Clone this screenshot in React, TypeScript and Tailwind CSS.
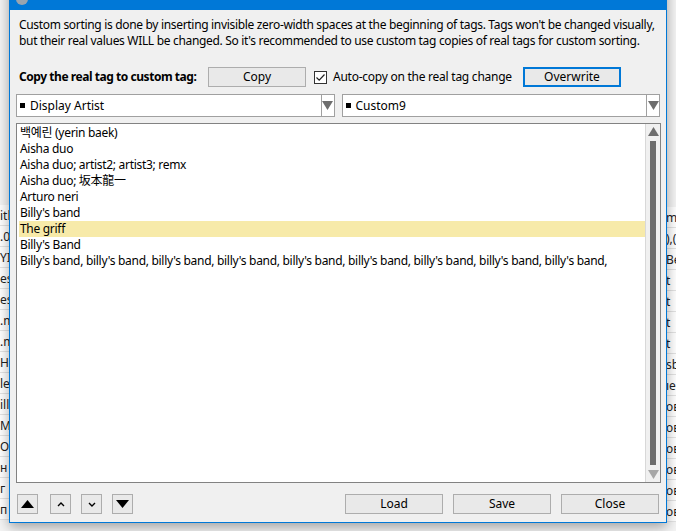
import React from "react";

const items = [
  { text: "백예린 (yerin baek)" },
  { text: "Aisha duo" },
  { text: "Aisha duo; artist2; artist3; remx" },
  { text: "Aisha duo; 坂本龍一" },
  { text: "Arturo neri" },
  { text: "Billy's band" },
  { text: "The griff", selected: true },
  { text: "Billy's Band" },
  {
    text: "Billy's band, billy's band, billy's band, billy's band, billy's band, billy's band, billy's band, billy's band, billy's band,",
  },
];

const leftBg = ["itl", ".0", "YI", "es", "es", ".m", ".m", "H(", "le", "ill", "My", "Ото", "н", "г", "п"];
const rightBg = ["m", "),(", "Be", "t", "t", "t", "t", "sb", "ıe", "ов", "ов", "ов", "ов", "ов", "ов"];

function WinButton({ label, focused, className }: { label: string; focused?: boolean; className?: string }) {
  return (
    <button
      type="button"
      className={[
        "flex h-[20px] w-[98px] shrink-0 items-center justify-center bg-[#e9e9e9] text-[12px] leading-none text-black",
        focused ? "border-2 border-[#0078d7]" : "border border-[#adadad]",
        className ?? "",
      ].join(" ")}
    >
      {label}
    </button>
  );
}

function SmallButton({ children }: { children: React.ReactNode }) {
  return (
    <button
      type="button"
      className="flex h-[20px] w-[21px] items-center justify-center border border-[#adadad] bg-[#e9e9e9]"
    >
      {children}
    </button>
  );
}

function Combo({ label, className }: { label: string; className?: string }) {
  return (
    <div className={["flex h-[23px] border border-[#a0a0a0] bg-white", className ?? ""].join(" ")}>
      <div className="flex flex-1 items-center gap-[5px] pl-[3px] text-[12px] text-black">
        <span className="inline-block h-[5px] w-[5px] bg-black" />
        <span>{label}</span>
      </div>
      <div className="flex w-[13px] items-center justify-center border-l border-[#a0a0a0]">
        <svg width="11" height="9" viewBox="0 0 11 9">
          <path d="M0 0 H11 L5.5 9 Z" fill="#6d6d6d" />
        </svg>
      </div>
    </div>
  );
}

export default function App() {
  return (
    <div className="relative h-[531px] w-[676px] overflow-hidden bg-[#f4f4f4] font-['Noto_Sans','Noto_Sans_CJK_KR',sans-serif]">
      {/* desktop behind the dialog */}
      <div className="absolute left-0 top-[205px] w-[12px] text-[12px] text-[#222]">
        {leftBg.map((t, i) => (
          <div key={i} className="h-[21px] overflow-hidden whitespace-nowrap border-b border-[#e3e3e3] bg-white leading-[21px]">
            {t}
          </div>
        ))}
      </div>
      <div className="absolute right-0 top-[207px] w-[12px] text-[12px] text-[#222]">
        {rightBg.map((t, i) => (
          <div key={i} className="h-[21px] overflow-hidden whitespace-nowrap border-b border-[#e3e3e3] bg-white pl-[2px] leading-[21px]">
            {t}
          </div>
        ))}
      </div>

      {/* dialog */}
      <div className="absolute left-[9px] top-[-22px] flex h-[545px] w-[658px] flex-col border border-[#0078d7] bg-[#f0f0f0] shadow-[0_4px_12px_rgba(0,0,0,0.35)]">
        <div className="relative h-[31px] shrink-0 bg-[#0078d7]">
          <span className="absolute left-[6px] top-[14px] h-[12px] w-[12px] rounded-full bg-[#9aa4ae]" />
          <span className="absolute left-[30px] top-[4px] text-[12px] text-white">Custom Sorting</span>
        </div>

        <div className="flex flex-1 flex-col px-[6px]">
          <p className="mt-[7px] whitespace-nowrap pl-[3px] text-[12px] leading-[16px] tracking-[-0.32px] text-black">
            Custom sorting is done by inserting invisible zero-width spaces at the beginning of tags. Tags won't be changed visually,
            <br />
            but their real values WILL be changed. So it's recommended to use custom tag copies of real tags for custom sorting.
          </p>

          <div className="mt-[18px] flex h-[20px] items-center">
            <span className="w-[192px] shrink-0 overflow-hidden whitespace-nowrap pl-[3px] text-[12px] font-bold tracking-[-0.45px] text-black">
              Copy the real tag to custom tag:
            </span>
            <WinButton label="Copy" />
            <span className="ml-[8px] flex h-[13px] w-[13px] shrink-0 items-center justify-center border border-[#333] bg-white">
              <svg width="11" height="11" viewBox="0 0 11 11">
                <path d="M1.5 5.5 L4.2 8.2 L9.5 2.5" stroke="#222" strokeWidth="1.2" fill="none" />
              </svg>
            </span>
            <span className="ml-[6px] w-[190px] shrink-0 whitespace-nowrap text-[12px] tracking-[-0.25px] text-black">
              Auto-copy on the real tag change
            </span>
            <WinButton label="Overwrite" focused />
          </div>

          <div className="mt-[7px] flex gap-[7px]">
            <Combo label="Display Artist" className="w-[319px]" />
            <Combo label="Custom9" className="w-[319px]" />
          </div>

          <div className="mt-[6px] flex h-[360px] w-[645px] border border-[#828282] bg-white">
            <div className="flex-1 overflow-hidden pl-[2px] pt-[1px] text-[12px] text-black">
              {items.map((it, i) => (
                <div
                  key={i}
                  className={[
                    "h-[16px] whitespace-nowrap pl-[1px] leading-[16px] tracking-[-0.3px]",
                    it.selected ? "bg-[#f7eaa9]" : "",
                  ].join(" ")}
                >
                  {it.text}
                </div>
              ))}
            </div>
            <div className="flex w-[15px] flex-col items-center border-l border-[#d8d8d8] bg-[#f0f0f0]">
              <svg className="mt-[3px]" width="11" height="9" viewBox="0 0 11 9">
                <path d="M0 9 H11 L5.5 0 Z" fill="#6d6d6d" />
              </svg>
              <div className="mt-[5px] w-[6px] flex-1 bg-[#6d6d6d]" />
              <svg className="mb-[3px] mt-[5px]" width="11" height="9" viewBox="0 0 11 9">
                <path d="M0 0 H11 L5.5 9 Z" fill="#a6a6a6" />
              </svg>
            </div>
          </div>

          <div className="mt-[11px] flex items-center pl-[1px]">
            <SmallButton>
              <svg width="13" height="8" viewBox="0 0 13 8">
                <path d="M0 8 H13 L6.5 0 Z" fill="#000" />
              </svg>
            </SmallButton>
            <span className="w-[12px]" />
            <SmallButton>
              <svg width="8" height="5" viewBox="0 0 8 5">
                <path d="M1 4 L4 1 L7 4" stroke="#000" strokeWidth="1.4" fill="none" />
              </svg>
            </SmallButton>
            <span className="w-[10px]" />
            <SmallButton>
              <svg width="8" height="5" viewBox="0 0 8 5">
                <path d="M1 1 L4 4 L7 1" stroke="#000" strokeWidth="1.4" fill="none" />
              </svg>
            </SmallButton>
            <span className="w-[10px]" />
            <SmallButton>
              <svg width="13" height="8" viewBox="0 0 13 8">
                <path d="M0 0 H13 L6.5 8 Z" fill="#000" />
              </svg>
            </SmallButton>
            <div className="ml-auto flex gap-[10px] pr-[1px]">
              <WinButton label="Load" />
              <WinButton label="Save" />
              <WinButton label="Close" />
            </div>
          </div>
        </div>
      </div>
    </div>
  );
}
